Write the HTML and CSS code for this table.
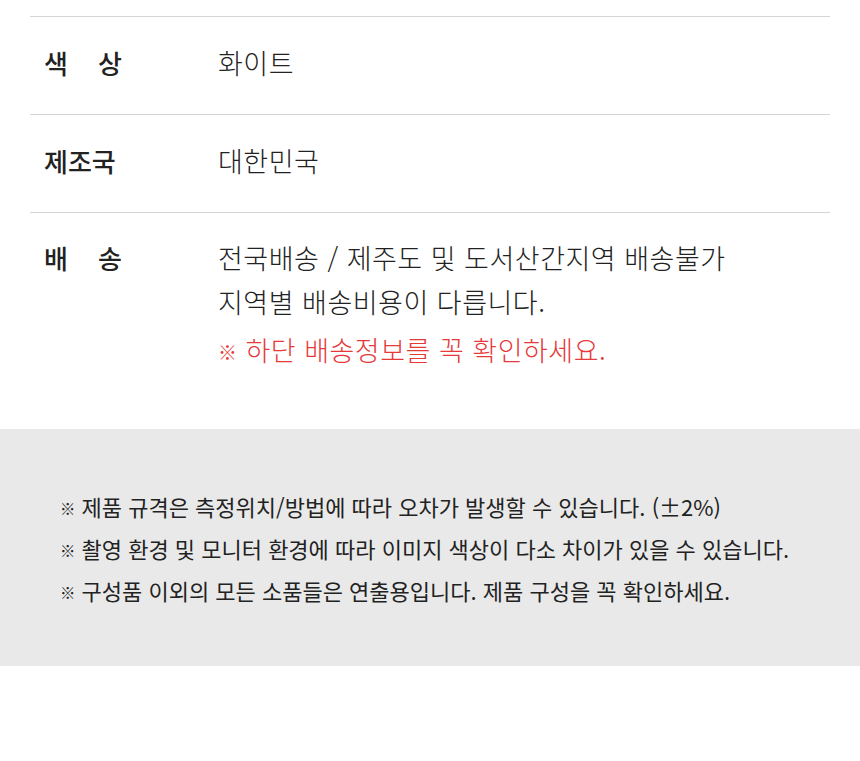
FILE: index.html
```html
<!DOCTYPE html>
<html lang="ko">
<head>
  <meta charset="UTF-8">
  <meta name="viewport" content="width=device-width, initial-scale=1.0">
  <title>상품 정보</title>
  <link rel="stylesheet" href="styles.css">
</head>
<body>
  <section class="info">
    <div class="info-row">
      <div class="info-label"><span>색 상</span></div>
      <div class="info-value">화이트</div>
    </div>
    <div class="info-row">
      <div class="info-label"><span>제조국</span></div>
      <div class="info-value">대한민국</div>
    </div>
    <div class="info-row shipping">
      <div class="info-label"><span>배 송</span></div>
      <div class="info-value">
        <p>전국배송 / 제주도 및 도서산간지역 배송불가</p>
        <p>지역별 배송비용이 다릅니다.</p>
        <p class="warn"><span class="mark">※</span> 하단 배송정보를 꼭 확인하세요.</p>
      </div>
    </div>
  </section>

  <section class="notice">
    <p><span class="mark">※</span> 제품 규격은 측정위치/방법에 따라 오차가 발생할 수 있습니다. (±2%)</p>
    <p><span class="mark">※</span> 촬영 환경 및 모니터 환경에 따라 이미지 색상이 다소 차이가 있을 수 있습니다.</p>
    <p><span class="mark">※</span> 구성품 이외의 모든 소품들은 연출용입니다. 제품 구성을 꼭 확인하세요.</p>
  </section>
</body>
</html>
```

FILE: styles.css
```css
body {
  margin: 0;
  padding: 0;
  background-color: #fff;
  color: #222;
  font-family: "Noto Sans CJK KR", "Noto Sans", sans-serif;
}

p {
  margin: 0;
}

.info {
  margin: 16px 30px 0;
  border-top: 1px solid #d4d4d4;
}

.info-row {
  display: flex;
  border-bottom: 1px solid #d4d4d4;
  padding: 27px 0 33px;
  line-height: 37px;
}

.info-row.shipping {
  border-bottom: none;
  padding: 23px 0 57px;
  line-height: 44px;
}

.info-label {
  width: 188px;
  flex-shrink: 0;
  padding-left: 14px;
  box-sizing: border-box;
  font-size: 26px;
  font-weight: 500;
}

.info-label span {
  display: inline-block;
  width: 78px;
  text-align: justify;
  text-align-last: justify;
}

.info-value {
  font-size: 27px;
  font-weight: 300;
  letter-spacing: 0.5px;
  color: #222;
}

.warn {
  color: #e63a3a;
  margin-top: 4px;
}

.mark {
  font-size: 0.7em;
  line-height: 0;
  vertical-align: 1px;
}

.notice {
  background-color: #e9e9e9;
  padding: 56px 60px 55px;
  font-size: 22px;
  line-height: 42px;
  color: #222;
}
```
